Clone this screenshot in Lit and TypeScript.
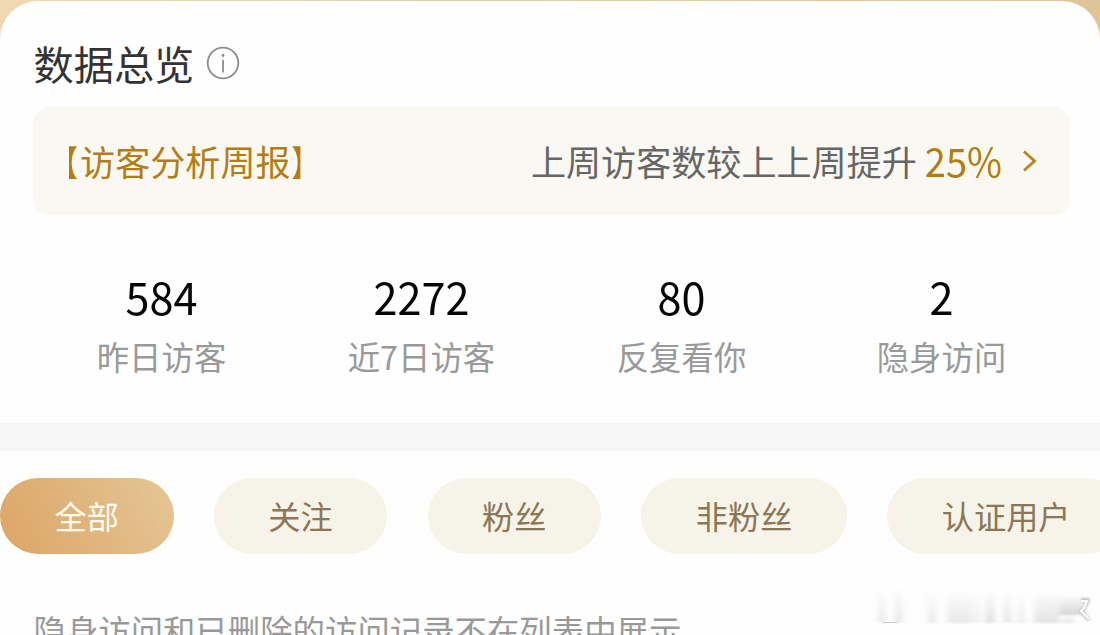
import { LitElement, html, css } from 'lit';
import { customElement, state } from 'lit/decorators.js';
import { classMap } from 'lit/directives/class-map.js';

@customElement('visitor-stat')
export class VisitorStat extends LitElement {
  static properties = {
    value: {},
    label: {},
  };

  declare value: string;
  declare label: string;

  static styles = css`
    :host {
      display: flex;
      flex-direction: column;
      align-items: center;
    }
    .value {
      font-size: 43.2px;
      line-height: 60px;
      color: #060606;
      transform: scaleY(1.05);
      transform-origin: 50% 80%;
    }
    .label {
      font-size: 32.4px;
      line-height: 48px;
      margin-top: 6px;
      color: #999;
    }
  `;

  render() {
    return html`
      <div class="value">${this.value}</div>
      <div class="label">${this.label}</div>
    `;
  }
}

@customElement('app-root')
export class AppRoot extends LitElement {
  @state() active = '全部';

  stats = [
    { value: '584', label: '昨日访客' },
    { value: '2272', label: '近7日访客' },
    { value: '80', label: '反复看你' },
    { value: '2', label: '隐身访问' },
  ];

  tabs = ['全部', '关注', '粉丝', '非粉丝', '认证用户'];

  static styles = css`
    :host {
      display: block;
      position: relative;
      height: 635px;
      overflow: hidden;
      box-sizing: border-box;
      padding-top: 1px;
      background: linear-gradient(90deg, #f0d9b2, #e6d2b4 30%, #dfc49a);
      font-family: 'Noto Sans CJK SC', sans-serif;
    }
    .sheet {
      height: 634px;
      background: #fefefe;
      border-radius: 38px 38px 0 0;
    }
    .title {
      display: flex;
      align-items: center;
      gap: 12px;
      height: 106px;
      box-sizing: border-box;
      padding: 18px 0 0 33.5px;
      font-size: 40.2px;
      line-height: 60px;
      color: #333;
    }
    .info {
      width: 34px;
      height: 34px;
      margin: 0 0 1px -0.5px;
    }
    .report {
      display: flex;
      align-items: center;
      height: 108px;
      box-sizing: border-box;
      margin: 0 30px 0 33px;
      padding: 0 33px 1px 12px;
      border-radius: 16px;
      background: #f9f8f3;
      font-size: 35.1px;
      line-height: 52px;
    }
    .report-name {
      flex: 1;
      color: #b47d14;
    }
    .bracket {
      display: inline-block;
      transform: scaleX(0.76);
    }
    .bracket.open {
      transform-origin: 75% 50%;
    }
    .bracket.close {
      transform-origin: 5% 50%;
    }
    .report-text {
      color: #666;
    }
    .percent {
      margin: 0 0 2px 8px;
      font-size: 38px;
      color: #b47d14;
      transform: scaleY(1.05);
    }
    .chevron {
      width: 15px;
      height: 22px;
      margin-left: 20px;
    }
    .stats {
      display: grid;
      grid-template-columns: repeat(4, 260px);
      height: 208px;
      box-sizing: border-box;
      padding: 51px 0 0 31.5px;
    }
    .divider {
      height: 28px;
      background: #f6f6f6;
    }
    .tabs {
      display: flex;
      gap: 40.2px;
      padding-top: 27px;
    }
    .tab {
      flex: none;
      height: 76px;
      box-sizing: border-box;
      padding: 0 54.6px 2px;
      border: 0;
      border-radius: 38px;
      background: #f6f4e8;
      color: #8b7657;
      font: inherit;
      font-size: 32.2px;
      line-height: 74px;
    }
    .tab.active {
      background: linear-gradient(65deg, #dda565, #e0b57e 50%, #e5c794);
      color: #fffcef;
    }
    .note {
      padding: 52px 0 0 33.5px;
      font-size: 32.4px;
      line-height: 48px;
      color: #999;
      white-space: nowrap;
    }
    .stamp {
      position: absolute;
      left: 870px;
      top: 580px;
      width: 230px;
      height: 55px;
    }
  `;

  render() {
    return html`
      <div class="sheet">
        <div class="title">
          <span>数据总览</span>
          <svg class="info" viewBox="0 0 34 34" fill="none" stroke="#8c8c8c">
            <circle cx="17" cy="17" r="15.3" stroke-width="1.8" />
            <path d="M17 14v12.5" stroke-width="1.8" />
            <circle cx="17" cy="9.5" r="1.4" fill="#8c8c8c" stroke="none" />
          </svg>
        </div>

        <div class="report">
          <span class="report-name"
            ><span class="bracket open">【</span>访客分析周报<span class="bracket close">】</span></span
          >
          <span class="report-text">上周访客数较上上周提升</span>
          <span class="percent">25%</span>
          <svg class="chevron" viewBox="0 0 15 22" fill="none" stroke="#b98524" stroke-width="2.9">
            <path d="M2 1.5l10.5 9.5L2 20.5" />
          </svg>
        </div>

        <div class="stats">
          ${this.stats.map(
            (s) => html`<visitor-stat .value=${s.value} .label=${s.label}></visitor-stat>`
          )}
        </div>

        <div class="divider"></div>

        <div class="tabs">
          ${this.tabs.map(
            (tab) => html`
              <button
                class=${classMap({ tab: true, active: tab === this.active })}
                @click=${() => (this.active = tab)}
              >${tab}</button>
            `
          )}
        </div>

        <div class="note">隐身访问和已删除的访问记录不在列表中展示</div>
      </div>

      <svg class="stamp" viewBox="0 0 230 55">
        <defs>
          <linearGradient id="fade" x1="0" y1="0" x2="0" y2="1">
            <stop offset="0" stop-color="#999" stop-opacity="0" />
            <stop offset="1" stop-color="#999" stop-opacity="1" />
          </linearGradient>
          <filter id="soft" x="-10%" y="-10%" width="120%" height="120%">
            <feGaussianBlur stdDeviation="3 1.2" />
          </filter>
          <filter id="glow" x="-50%" y="-50%" width="200%" height="200%">
            <feGaussianBlur stdDeviation="1" />
          </filter>
        </defs>
        <g fill="url(#fade)" filter="url(#soft)">
          <rect x="9" y="8" width="5" height="35" opacity="0.3" />
          <rect x="26" y="8" width="5" height="35" opacity="0.36" />
          <rect x="58" y="10" width="8" height="33" opacity="0.22" />
          <rect x="77" y="10" width="25" height="33" opacity="0.22" />
          <rect x="104" y="10" width="6" height="33" opacity="0.18" />
          <rect x="116" y="10" width="8" height="33" opacity="0.36" />
          <rect x="134" y="10" width="6" height="33" opacity="0.32" />
          <rect x="148" y="10" width="6" height="33" opacity="0.2" />
          <rect x="164" y="10" width="26" height="33" opacity="0.27" />
          <rect x="190" y="14" width="24" height="21" opacity="0.4" />
          <rect x="194" y="34" width="9" height="9" opacity="0.3" />
        </g>
        <path d="M13 42.5h14" stroke="#ccc" stroke-width="1" />
        <g fill="none" stroke-linejoin="round">
          <path d="M211 20h7l-4 8-3 3 8 9" stroke="#c4c4c4" stroke-width="4" filter="url(#glow)" />
          <path d="M211 21h6l-3 7-3 3 8 8" stroke="#fff" stroke-width="2" />
        </g>
      </svg>
    `;
  }
}
